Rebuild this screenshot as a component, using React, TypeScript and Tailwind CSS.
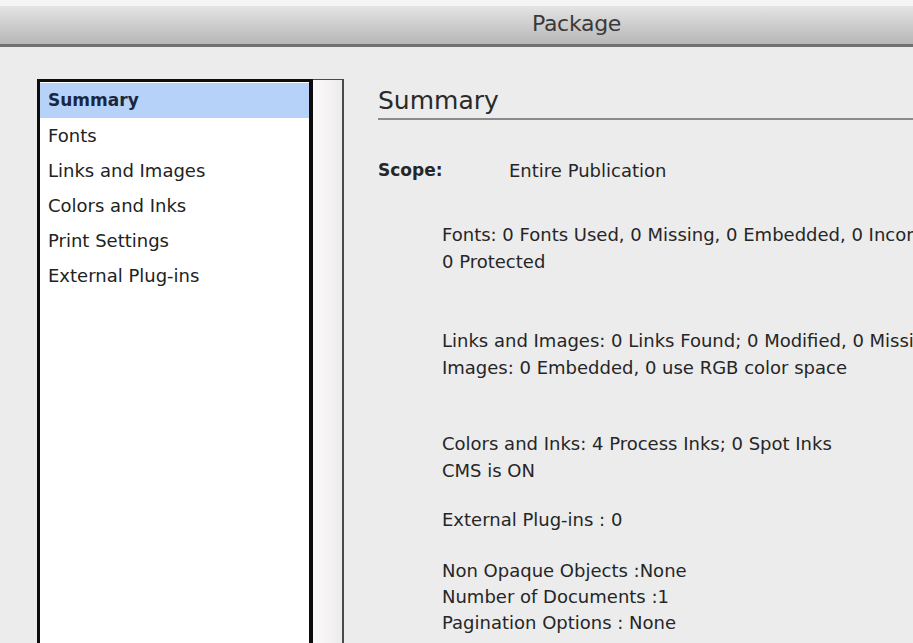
const sections = [
  "Summary",
  "Fonts",
  "Links and Images",
  "Colors and Inks",
  "Print Settings",
  "External Plug-ins",
];

function TitleBar() {
  return (
    <div className="h-[47px] border-t-[6px] border-t-[#f4f4f4] border-b-[3px] border-b-[#717171] bg-gradient-to-b from-[#e4e4e4] to-[#b7b7b7] flex items-center justify-center">
      <span className="text-[22px] text-[#3a3a3a] ml-[240px] -mt-[3px] tracking-[-0.3px]">Package</span>
    </div>
  );
}

function SectionList() {
  return (
    <div className="flex h-[570px] shrink-0">
      <div className="w-[276px] border-l-[3px] border-t-[3px] border-r-4 border-[#0d0d0d] bg-white pt-px">
        {sections.map((s, i) => (
          <div
            key={s}
            className={
              i === 0
                ? "h-[35px] flex items-center pl-2 bg-[#b6d2f8] text-[#1b2740] font-bold text-[17px]"
                : "h-[35px] flex items-center pl-2 text-[#222] text-[18px]"
            }
          >
            {s}
          </div>
        ))}
      </div>
      <div className="w-[31px] border-t border-r-2 border-[#4a4a4a] bg-gradient-to-r from-[#fafafa] via-[#f6f3f3] to-[#ececec]" />
    </div>
  );
}

function Line({ children }: { children: React.ReactNode }) {
  return <div className="h-[27px] leading-[27px] whitespace-nowrap">{children}</div>;
}

function SummaryPanel() {
  return (
    <div className="flex-1 min-w-0 overflow-hidden pl-[34px] pt-[5px] text-[#262626] text-[18px]">
      <div className="border-b-2 border-[#8b8b8b] h-[36px] leading-[34px] text-[25px] text-[#2a2a2a]">
        Summary
      </div>
      <div className="mt-[37px] flex h-[27px] leading-[27px]">
        <span className="w-[131px] font-bold text-[17px]">Scope:</span>
        <span>Entire Publication</span>
      </div>
      <div className="pl-[64px] mt-[37px]">
        <Line>Fonts: 0 Fonts Used, 0 Missing, 0 Embedded, 0 Incomplete, 0</Line>
        <Line>0 Protected</Line>
        <div className="mt-[52px]">
          <Line>Links and Images: 0 Links Found; 0 Modified, 0 Missing</Line>
          <Line>Images: 0 Embedded, 0 use RGB color space</Line>
        </div>
        <div className="mt-[49px]">
          <Line>Colors and Inks: 4 Process Inks; 0 Spot Inks</Line>
          <Line>CMS is ON</Line>
        </div>
        <div className="mt-[22px]">
          <Line>External Plug-ins : 0</Line>
        </div>
        <div className="mt-[25px] leading-[26px] whitespace-nowrap">
          <div>Non Opaque Objects :None</div>
          <div>Number of Documents :1</div>
          <div>Pagination Options : None</div>
        </div>
      </div>
    </div>
  );
}

export default function App() {
  return (
    <div className="w-[913px] h-[643px] overflow-hidden bg-[#ececec] font-['DejaVu_Sans',sans-serif]">
      <TitleBar />
      <div className="flex pt-[32px] pl-[37px]">
        <SectionList />
        <SummaryPanel />
      </div>
    </div>
  );
}
